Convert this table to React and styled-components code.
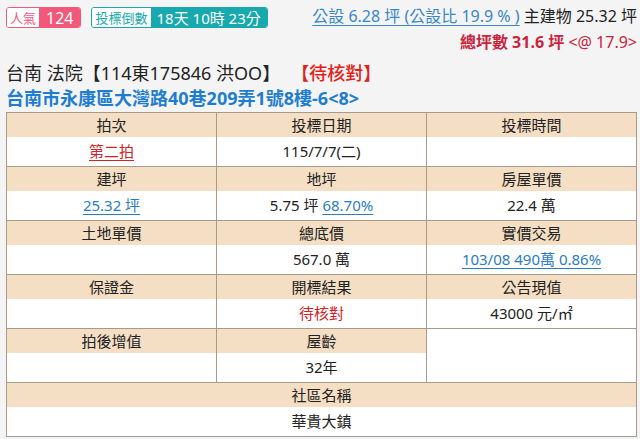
import React from 'react';
import styled, { createGlobalStyle } from 'styled-components';

const Global = createGlobalStyle`
  html, body {
    margin: 0;
    padding: 0;
    background: #f4f4f4;
    font-family: "Noto Sans", "Noto Sans CJK TC", sans-serif;
    color: #222;
  }
`;

const s = {
  Page: styled.div`
    padding: 0 3px 0 6px;
  `,
  TopRow: styled.div`
    display: flex;
    justify-content: space-between;
    align-items: flex-start;
    height: 60px;
  `,
  Badges: styled.div`
    display: flex;
    gap: 10px;
    margin-top: 7px;
    flex-shrink: 0;
  `,
  Badge: styled.div`
    display: flex;
    height: 21px;
    border: 1px solid ${(p) => p.$color};
    border-radius: 3px;
    overflow: hidden;
    box-sizing: border-box;
    white-space: nowrap;
  `,
  BadgeLabel: styled.span`
    display: flex;
    align-items: center;
    padding: 0 3px;
    background: #fff;
    color: ${(p) => p.$color};
    font-size: 13px;
  `,
  BadgeValue: styled.span`
    display: flex;
    align-items: center;
    padding: 0 ${(p) => p.$pad || 8}px;
    background: ${(p) => p.$color};
    color: #fff;
    font-size: ${(p) => p.$size || 15}px;
  `,
  AreaInfo: styled.div`
    display: flex;
    flex-direction: column;
    align-items: flex-end;
    margin-top: 3px;
    font-size: 16px;
    line-height: 26px;
    white-space: nowrap;
  `,
  Link: styled.a`
    color: ${(p) => p.$color || '#3a86cc'};
    text-decoration: underline;
    text-underline-offset: 3px;
    cursor: pointer;
  `,
  Total: styled.div`
    color: #c9243f;
    b {
      font-weight: 700;
    }
  `,
  Title: styled.div`
    font-size: 18px;
    line-height: 26px;
    color: #222;
  `,
  Pending: styled.span`
    color: #e3211b;
    font-weight: 500;
    margin-left: 20px;
  `,
  Address: styled.div`
    font-size: 18px;
    line-height: 24px;
    font-weight: 700;
    color: #1f7dd0;
    margin-bottom: 2px;
  `,
  Table: styled.div`
    display: grid;
    grid-template-columns: 1fr 1fr 1fr;
    gap: 1px;
    padding: 1px;
    background: #a89a8b;
    width: 631px;
    box-sizing: border-box;
  `,
  Cell: styled.div`
    display: flex;
    flex-direction: column;
    background: #fff;
    grid-column: ${(p) => (p.$wide ? '1 / span 3' : 'auto')};
    font-size: 15px;
    text-align: center;
  `,
  Head: styled.div`
    height: 24px;
    line-height: 24px;
    background: #f4dec4;
  `,
  Value: styled.div`
    height: 29px;
    line-height: 29px;
    color: ${(p) => p.$color || '#222'};
  `,
};

const rows = [
  { head: '拍次', value: '第二拍', link: '#d2232a' },
  { head: '投標日期', value: '115/7/7(二)' },
  { head: '投標時間', value: '' },
  { head: '建坪', value: '25.32 坪', link: '#2a7cc4' },
  { head: '地坪', value: '5.75 坪 ', extra: '68.70%' },
  { head: '房屋單價', value: '22.4 萬' },
  { head: '土地單價', value: '' },
  { head: '總底價', value: '567.0 萬' },
  { head: '實價交易', value: '103/08 490萬 0.86%', link: '#2a7cc4' },
  { head: '保證金', value: '' },
  { head: '開標結果', value: '待核對', color: '#d2232a' },
  { head: '公告現值', value: '43000 元/㎡' },
  { head: '拍後增值', value: '' },
  { head: '屋齡', value: '32年' },
  { empty: true },
  { head: '社區名稱', value: '華貴大鎮', wide: true },
];

const App = () => (
  <>
    <Global />
    <s.Page>
      <s.TopRow>
        <s.Badges>
          <s.Badge $color="#f1587a">
            <s.BadgeLabel $color="#f1587a">人氣</s.BadgeLabel>
            <s.BadgeValue $color="#f1587a" $size={16} $pad={7}>124</s.BadgeValue>
          </s.Badge>
          <s.Badge $color="#17a9ae">
            <s.BadgeLabel $color="#17a9ae">投標倒數</s.BadgeLabel>
            <s.BadgeValue $color="#17a9ae" $size={15} $pad={6}>18天 10時 23分</s.BadgeValue>
          </s.Badge>
        </s.Badges>
        <s.AreaInfo>
          <div>
            <s.Link>公設 6.28 坪 (公設比 19.9 % )</s.Link> 主建物 25.32 坪
          </div>
          <s.Total>
            <b>總坪數 31.6 坪</b> &lt;@ 17.9&gt;
          </s.Total>
        </s.AreaInfo>
      </s.TopRow>
      <s.Title>
        台南 法院【114東175846 洪OO】<s.Pending>【待核對】</s.Pending>
      </s.Title>
      <s.Address>台南市永康區大灣路40巷209弄1號8樓-6&lt;8&gt;</s.Address>
      <s.Table>
        {rows.map((r, i) =>
          r.empty ? (
            <s.Cell key={i} />
          ) : (
            <s.Cell key={i} $wide={r.wide}>
              <s.Head>{r.head}</s.Head>
              <s.Value $color={r.color}>
                {r.link ? <s.Link $color={r.link}>{r.value}</s.Link> : r.value}
                {r.extra && <s.Link $color="#2a7cc4">{r.extra}</s.Link>}
              </s.Value>
            </s.Cell>
          )
        )}
      </s.Table>
    </s.Page>
  </>
);

export default App;
